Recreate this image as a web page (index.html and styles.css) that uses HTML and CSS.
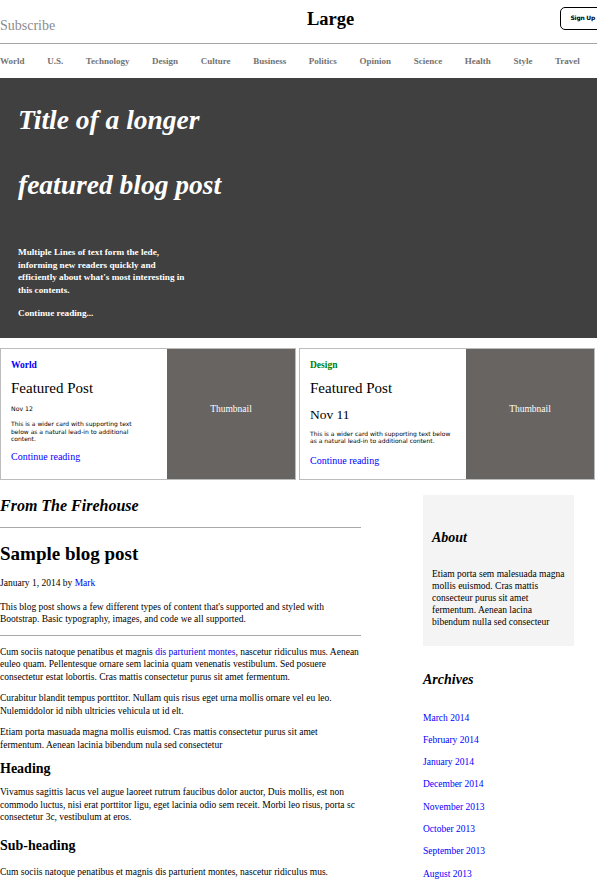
FILE: index.html
```html
<!DOCTYPE html>
<html lang="en">
<head>
<meta charset="utf-8">
<title>Large</title>
<link rel="stylesheet" href="styles.css">
</head>
<body>
<div class="page">
  <header class="masthead">
    <a class="subscribe" href="#">Subscribe</a>
    <a class="brand" href="#">Large</a>
    <a class="signup" href="#">Sign Up</a>
  </header>

  <nav class="topnav">
    <a href="#">World</a>
    <a href="#">U.S.</a>
    <a href="#">Technology</a>
    <a href="#">Design</a>
    <a href="#">Culture</a>
    <a href="#">Business</a>
    <a href="#">Politics</a>
    <a href="#">Opinion</a>
    <a href="#">Science</a>
    <a href="#">Health</a>
    <a href="#">Style</a>
    <a href="#">Travel</a>
  </nav>

  <section class="hero">
    <h1 class="hero-title">Title of a longer featured blog post</h1>
    <p class="hero-lede">Multiple Lines of text form the lede, informing new readers quickly and efficiently about what's most interesting in this contents.</p>
    <p class="hero-more"><a href="#">Continue reading...</a></p>
  </section>

  <div class="cards">
    <article class="card card-a">
      <div class="card-body">
        <strong class="card-cat cat-world">World</strong>
        <h3 class="card-title">Featured Post</h3>
        <div class="card-date">Nov 12</div>
        <p class="card-text">This is a wider card with supporting text below as a natural lead-in to additional content.</p>
        <a class="card-link" href="#">Continue reading</a>
      </div>
      <div class="thumb">Thumbnail</div>
    </article>
    <article class="card card-b">
      <div class="card-body">
        <strong class="card-cat cat-design">Design</strong>
        <h3 class="card-title">Featured Post</h3>
        <div class="card-date">Nov 11</div>
        <p class="card-text">This is a wider card with supporting text below as a natural lead-in to additional content.</p>
        <a class="card-link" href="#">Continue reading</a>
      </div>
      <div class="thumb">Thumbnail</div>
    </article>
  </div>

  <main class="content">
    <div class="posts">
      <h3 class="section-title">From The Firehouse</h3>
      <hr class="rule">
      <article class="post">
        <h2 class="post-title">Sample blog post</h2>
        <p class="post-meta">January 1, 2014 by <a href="#">Mark</a></p>
        <p>This blog post shows a few different types of content that's supported and styled with Bootstrap. Basic typography, images, and code we all supported.</p>
        <hr class="rule rule-post">
        <p>Cum sociis natoque penatibus et magnis <a href="#">dis parturient montes</a>, nascetur ridiculus mus. Aenean euleo quam. Pellentesque ornare sem lacinia quam venenatis vestibulum. Sed posuere consectetur estat lobortis. Cras mattis consectetur purus sit amet fermentum.</p>
        <p>Curabitur blandit tempus porttitor. Nullam quis risus eget urna mollis ornare vel eu leo. Nulemiddolor id nibh ultricies vehicula ut id elt.</p>
        <p>Etiam porta masuada magna mollis euismod. Cras mattis consectetur purus sit amet fermentum. Aenean lacinia bibendum nula sed consectetur</p>
        <h2 class="post-heading">Heading</h2>
        <p>Vivamus sagittis lacus vel augue laoreet rutrum faucibus dolor auctor, Duis mollis, est non commodo luctus, nisi erat porttitor ligu, eget lacinia odio sem receit. Morbi leo risus, porta sc consectetur 3c, vestibulum at eros.</p>
        <h3 class="post-sub">Sub-heading</h3>
        <p>Cum sociis natoque penatibus et magnis dis parturient montes, nascetur ridiculus mus.</p>
      </article>
    </div>

    <aside class="sidebar">
      <div class="about">
        <h4 class="side-title">About</h4>
        <p>Etiam porta sem malesuada magna mollis euismod. Cras mattis consecteur purus sit amet fermentum. Aenean lacina bibendum nulla sed consecteur</p>
      </div>
      <h4 class="side-title archives-title">Archives</h4>
      <ol class="archives">
        <li><a href="#">March 2014</a></li>
        <li><a href="#">February 2014</a></li>
        <li><a href="#">January 2014</a></li>
        <li><a href="#">December 2014</a></li>
        <li><a href="#">November 2013</a></li>
        <li><a href="#">October 2013</a></li>
        <li><a href="#">September 2013</a></li>
        <li><a href="#">August 2013</a></li>
      </ol>
    </aside>
  </main>
</div>
</body>
</html>
```

FILE: styles.css
```css
html { scrollbar-width: none; }
html::-webkit-scrollbar { display: none; }

body {
  margin: 0;
  overflow-x: hidden;
  font-family: "Liberation Serif", "Times New Roman", serif;
  font-size: 9.5px;
  line-height: 12.5px;
  color: #000;
  background: #fff;
}

a { color: #0000ee; text-decoration: none; }

.page { width: 597px; overflow: hidden; }

/* masthead */
.masthead {
  display: grid;
  grid-template-columns: 307px auto 1fr;
  align-items: start;
  height: 43px;
  border-bottom: 1px solid #a4a4a4;
}
.subscribe {
  margin-top: 18px;
  font-size: 14px;
  line-height: 16px;
  color: #8c8c8c;
}
.brand {
  margin-top: 8px;
  font-size: 18.5px;
  line-height: 22px;
  font-weight: bold;
  color: #000;
}
.signup {
  justify-self: end;
  margin: 7px -8px 0 0;
  height: 23px;
  box-sizing: border-box;
  padding: 0 9px 0 10px;
  display: flex;
  align-items: center;
  border: 1px solid #000;
  border-radius: 5px;
  font-family: "DejaVu Sans", sans-serif;
  font-weight: bold;
  font-size: 6px;
  letter-spacing: -0.25px;
  color: #000;
  white-space: nowrap;
}

/* nav */
.topnav {
  display: flex;
  justify-content: space-between;
  align-items: center;
  height: 34px;
  padding-right: 17px;
}
.topnav a {
  font-weight: bold;
  font-size: 9px;
  color: #737373;
}

/* hero */
.hero {
  background: #404040;
  color: #fff;
  padding: 9px 18px 18px;
}
.hero-title {
  margin: 0;
  font-size: 27.5px;
  line-height: 65px;
  font-style: italic;
  font-weight: bold;
  width: 240px;
}
.hero-lede {
  margin: 29px 0 0;
  width: 178px;
  font-size: 9.2px;
  line-height: 12.5px;
  font-weight: bold;
}
.hero-more {
  margin: 11px 0 0;
  font-size: 9.2px;
  line-height: 12.5px;
  font-weight: bold;
}
.hero-more a { color: #fff; }

/* cards */
.cards {
  display: grid;
  grid-template-columns: 1fr 1fr;
  gap: 3px;
  margin-top: 10px;
  padding-right: 2px;
}
.card {
  display: flex;
  height: 132px;
  box-sizing: border-box;
  border: 1px solid #bcbcbc;
}
.card-body {
  width: 166px;
  box-sizing: border-box;
  padding: 10px 10px 0;
  display: flex;
  flex-direction: column;
  align-items: flex-start;
}
.card-cat {
  font-size: 9.5px;
  line-height: 12px;
}
.cat-world { color: #0000ff; }
.cat-design { color: #008000; }
.card-title {
  margin: 8px 0 0;
  font-size: 15px;
  line-height: 18px;
  font-weight: normal;
}
.card-date {
  margin-top: 7.5px;
  font-family: "DejaVu Sans", sans-serif;
  font-size: 6.2px;
  line-height: 9px;
}
.card-text {
  margin: 7px 0 0;
  font-family: "DejaVu Sans", sans-serif;
  font-size: 6px;
  line-height: 7.5px;
  max-width: 130px;
}
.card-link {
  margin-top: 8px;
  font-size: 10px;
  line-height: 12px;
  color: #0000ff;
}
.card-b .card-date {
  margin-top: 10px;
  font-family: "Liberation Serif", serif;
  font-size: 13.5px;
  line-height: 16px;
}
.card-b .card-text { max-width: 146px; }
.card-b .card-link { margin-top: 10.5px; }
.thumb {
  flex: 1;
  background: #686462;
  color: #fff;
  display: flex;
  align-items: center;
  justify-content: center;
  padding-bottom: 9px;
  font-size: 9.5px;
}

/* main content */
.content {
  display: grid;
  grid-template-columns: 361px 151px;
  column-gap: 62px;
  align-items: start;
}
.section-title {
  margin: 16.5px 0 0;
  font-size: 16px;
  line-height: 19px;
  font-style: italic;
  font-weight: bold;
}
.rule {
  margin: 12px 0 0;
  border: 0;
  border-top: 1px solid #a8a8a8;
  height: 0;
}
.post p { margin: 0 0 9px; }
.post-title {
  margin: 15px 0 0;
  font-size: 19px;
  line-height: 22px;
  font-weight: bold;
}
.post .post-meta { margin: 12px 0 11px; }
.post .rule-post { margin: 0 0 10px; }
.post-heading {
  margin: 9px 0 9px;
  font-size: 14px;
  line-height: 17px;
}
.post-sub {
  margin: 13px 0 12px;
  font-size: 14px;
  line-height: 17px;
}

/* sidebar */
.sidebar { margin-top: 15px; }
.about {
  background: #f4f4f4;
  padding: 9px 9px 18px;
}
.about p { margin: 0; line-height: 12px; }
.side-title {
  font-size: 14px;
  line-height: 17px;
  font-style: italic;
  font-weight: bold;
}
.about .side-title { margin: 25.5px 0 21.5px; }
.archives-title { margin: 25.5px 0 0; }
.archives {
  list-style: none;
  margin: 18.5px 0 0;
  padding: 0;
}
.archives li { line-height: 22.3px; }
.archives a { color: #0000ff; }
```
